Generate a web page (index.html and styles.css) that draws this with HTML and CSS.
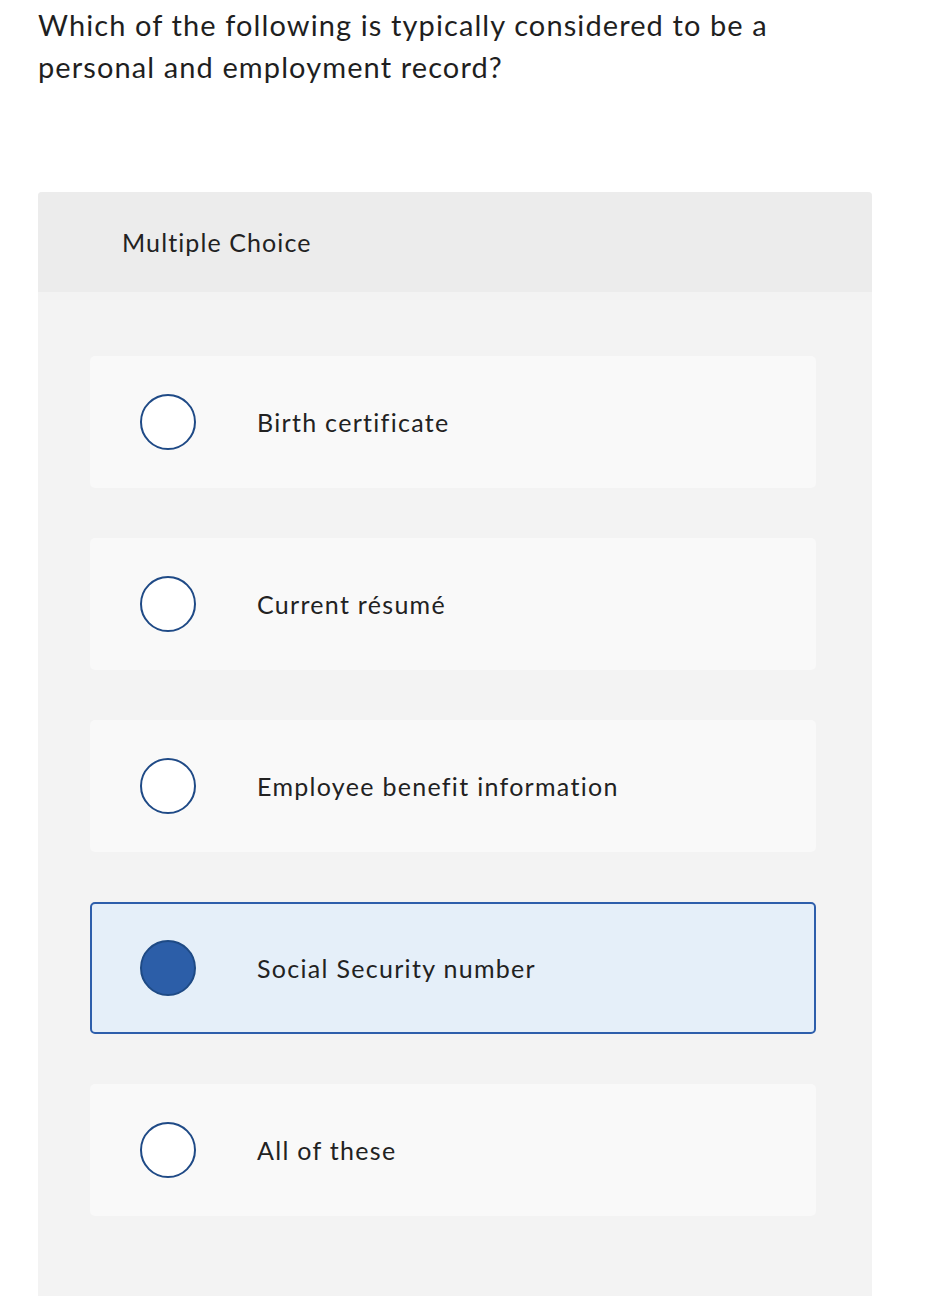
FILE: index.html
```html
<!DOCTYPE html>
<html>
<head>
<meta charset="utf-8">
<link rel="stylesheet" href="styles.css">
</head>
<body>
<div class="page">
  <h1 class="question">Which of the following is typically considered to be a personal and employment record?</h1>
  <div class="panel">
    <div class="panel-head">Multiple Choice</div>
    <div class="panel-body">
      <div class="option"><span class="radio"></span><span class="label">Birth certificate</span></div>
      <div class="option"><span class="radio"></span><span class="label">Current résumé</span></div>
      <div class="option"><span class="radio"></span><span class="label">Employee benefit information</span></div>
      <div class="option selected"><span class="radio"></span><span class="label">Social Security number</span></div>
      <div class="option"><span class="radio"></span><span class="label">All of these</span></div>
    </div>
  </div>
</div>
</body>
</html>
```
FILE: styles.css
```css
html, body {
  margin: 0;
  padding: 0;
  background: #ffffff;
}
body {
  font-family: Lato, "Open Sans", Arial, sans-serif;
  font-variant-ligatures: none;
  color: #222222;
}
.page {
  padding: 4px 0 0 38px;
  width: 834px;
}
.question {
  margin: 0;
  font-size: 29px;
  font-weight: 400;
  line-height: 42px;
  letter-spacing: 1.1px;
  width: 780px;
  color: #1f1f1f;
}
.panel {
  margin-top: 104px;
  background: #f3f3f3;
  border-radius: 4px 4px 0 0;
  height: 1200px;
}
.panel-head {
  height: 100px;
  background: #ececec;
  border-radius: 4px 4px 0 0;
  display: flex;
  align-items: center;
  padding-left: 84px;
  font-size: 25px;
  letter-spacing: 1.1px;
  color: #222;
}
.panel-body {
  padding: 64px 56px 0 52px;
  display: flex;
  flex-direction: column;
  gap: 50px;
}
.option {
  height: 132px;
  box-sizing: border-box;
  background: #f9f9f9;
  border-radius: 5px;
  display: flex;
  align-items: center;
  padding-left: 50px;
  border: 2px solid transparent;
}
.option .radio {
  width: 56px;
  height: 56px;
  box-sizing: border-box;
  border-radius: 50%;
  border: 2px solid #1f4a86;
  background: #ffffff;
  flex: none;
  margin-left: -2px;
}
.option .label {
  margin-left: 61px;
  font-size: 25px;
  letter-spacing: 1.3px;
  color: #222;
}
.option.selected {
  background: #e5eff9;
  border-color: #2d5eab;
}
.option.selected .radio {
  background: #2c5ea8;
  border-color: #1e4a85;
}
```
